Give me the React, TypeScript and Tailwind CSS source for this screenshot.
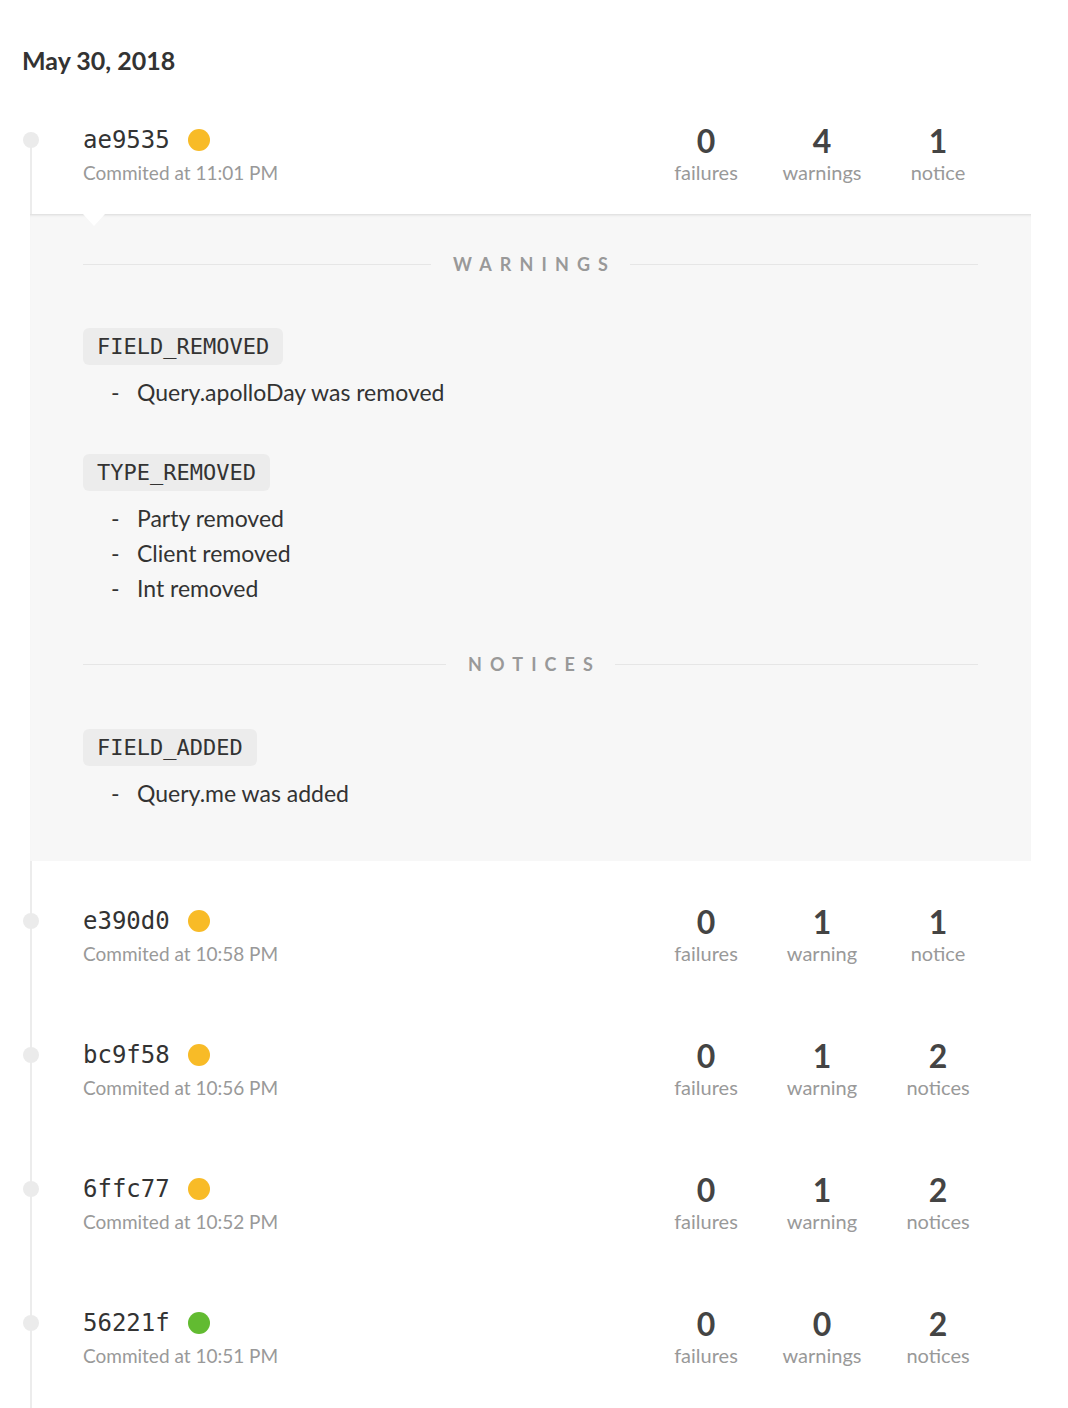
import React from 'react';

type Commit = {
    hash: string;
    time: string;
    status: 'warn' | 'ok';
    failures: number;
    warnings: number;
    notices: number;
    expanded?: boolean;
};

const commits: Commit[] = [
    { hash: 'ae9535', time: '11:01 PM', status: 'warn', failures: 0, warnings: 4, notices: 1, expanded: true },
    { hash: 'e390d0', time: '10:58 PM', status: 'warn', failures: 0, warnings: 1, notices: 1 },
    { hash: 'bc9f58', time: '10:56 PM', status: 'warn', failures: 0, warnings: 1, notices: 2 },
    { hash: '6ffc77', time: '10:52 PM', status: 'warn', failures: 0, warnings: 1, notices: 2 },
    { hash: '56221f', time: '10:51 PM', status: 'ok', failures: 0, warnings: 0, notices: 2 },
];

const warningGroups = [
    { code: 'FIELD_REMOVED', items: ['Query.apolloDay was removed'] },
    { code: 'TYPE_REMOVED', items: ['Party removed', 'Client removed', 'Int removed'] },
];

const noticeGroups = [{ code: 'FIELD_ADDED', items: ['Query.me was added'] }];

const sans = { fontFamily: 'Lato, "Liberation Sans", sans-serif' };
const mono = { fontFamily: '"DejaVu Sans Mono", "Liberation Mono", monospace' };

const Stat = ({ value, singular, plural }: { value: number; singular: string; plural: string }) => (
    <div className="w-[116px] flex flex-col items-center">
        <span className="h-8 leading-8 mt-[1px] text-[32px] font-bold text-[#444]">{value}</span>
        <span className="h-[34px] leading-[34px] mt-[-2px] text-[20px] text-[#999]">{value === 1 ? singular : plural}</span>
    </div>
);

const CommitRow = ({ commit }: { commit: Commit }) => (
    <div className="relative h-[134px] flex items-start pt-[44px] pl-[53px] pr-[35px]">
        {/* timeline dot */}
        <div className="absolute left-[-7px] top-[52px] w-4 h-4 rounded-full bg-[#ebebeb]" />
        <div className="flex-1 min-w-0">
            <div className="h-8 flex items-center gap-[18px]">
                <span className="text-[24px] text-[#333] leading-8" style={mono}>{commit.hash}</span>
                <span className={`w-[22px] h-[22px] rounded-full ${commit.status === 'ok' ? 'bg-[#62bb31]' : 'bg-[#f8bb27]'}`} />
            </div>
            <div className="h-[34px] leading-[34px] text-[19px] text-[#999]">Commited at {commit.time}</div>
        </div>
        <div className="flex">
            <Stat value={commit.failures} singular="failure" plural="failures" />
            <Stat value={commit.warnings} singular="warning" plural="warnings" />
            <Stat value={commit.notices} singular="notice" plural="notices" />
        </div>
    </div>
);

const SectionTitle = ({ label }: { label: string }) => (
    <div className="h-6 flex items-center">
        <div className="flex-1 h-px bg-[#e6e6e6]" />
        <span className="px-[22px] text-[18px] font-bold tracking-[0.45em] text-[#999] leading-6 mr-[-0.45em]">{label}</span>
        <div className="flex-1 h-px bg-[#e6e6e6]" />
    </div>
);

const Group = ({ code, items }: { code: string; items: string[] }) => (
    <div>
        <span className="inline-block h-[37px] leading-[37px] px-[14px] rounded-md bg-[#ececec] text-[22px] text-[#333]" style={mono}>
            {code}
        </span>
        <ul className="mt-[10px]">
            {items.map((item) => (
                <li key={item} className="flex h-[35px] leading-[35px] text-[23px] text-[#333]">
                    <span className="w-[26px] ml-[28px]">-</span>
                    <span>{item}</span>
                </li>
            ))}
        </ul>
    </div>
);

const DetailsPanel = () => (
    <div className="relative z-10 bg-[#f7f7f7] px-[53px] pt-[38px] pb-[50px] shadow-[inset_0_3px_3px_-2px_rgba(0,0,0,0.12)]">
        {/* caret pointing to the commit */}
        <div className="absolute left-[53px] top-0 w-0 h-0 border-l-[11px] border-r-[11px] border-t-[12px] border-l-transparent border-r-transparent border-t-white" />
        <SectionTitle label="WARNINGS" />
        <div className="mt-[52px] flex flex-col gap-[44px]">
            {warningGroups.map((g) => <Group key={g.code} {...g} />)}
        </div>
        <div className="mt-[46px]">
            <SectionTitle label="NOTICES" />
        </div>
        <div className="mt-[53px] flex flex-col gap-[44px]">
            {noticeGroups.map((g) => <Group key={g.code} {...g} />)}
        </div>
    </div>
);

export default function App() {
    return (
        <div className="min-h-screen bg-white pt-[40px] overflow-hidden" style={sans}>
            <h1 className="pl-[22px] h-10 leading-10 text-[25px] font-bold text-[#333]">May 30, 2018</h1>
            <div className="relative ml-[30px] w-[1001px]">
                <div className="absolute left-0 top-[60px] bottom-0 w-[2px] bg-[#ececec]" />
                {commits.map((c) => (
                    <React.Fragment key={c.hash}>
                        <CommitRow commit={c} />
                        {c.expanded && <DetailsPanel />}
                    </React.Fragment>
                ))}
                <div className="h-[40px]" />
            </div>
        </div>
    );
}
